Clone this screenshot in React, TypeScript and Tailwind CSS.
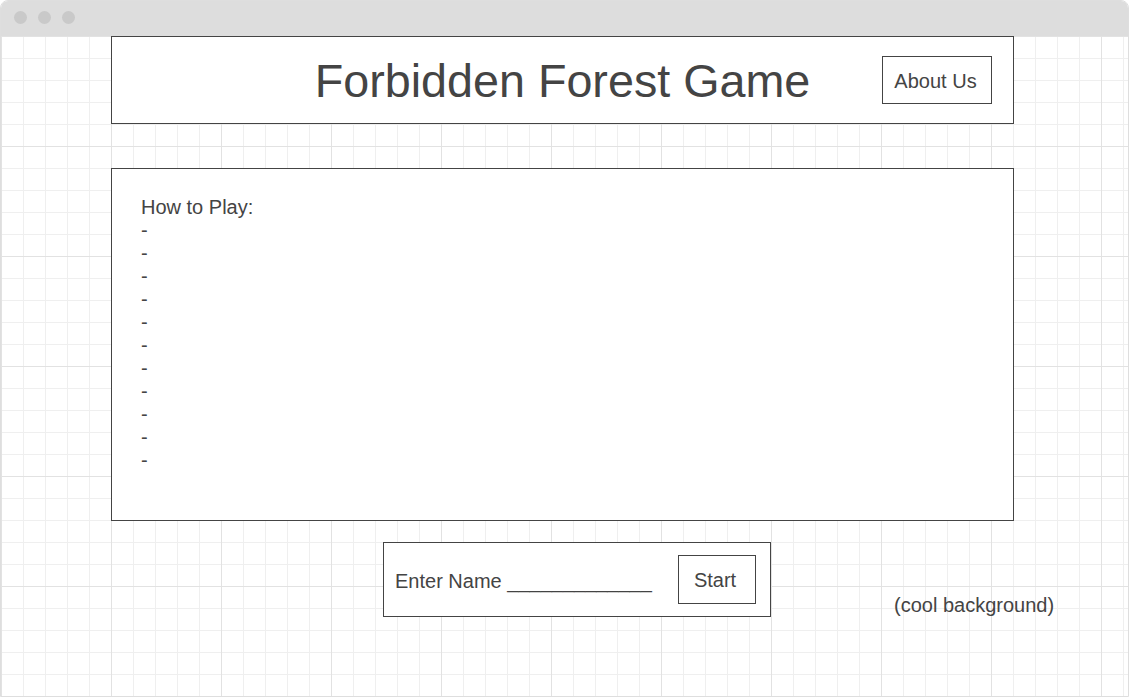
export default function App() {
  const dashes = Array.from({ length: 11 });
  return (
    <div className="w-[1129px] h-[699px] bg-white font-['Liberation_Sans',Arial,sans-serif] text-[#444444]">
      <div className="h-[697px] w-full border border-[#dedede] rounded-t-[8px] overflow-hidden flex flex-col">
        {/* window bar */}
        <div className="h-[35px] bg-[#dddddd] flex items-center gap-[11px] pl-[13px] pb-[2px] shrink-0">
          <span className="w-[13px] h-[13px] rounded-full bg-[#c9c9c9]" />
          <span className="w-[13px] h-[13px] rounded-full bg-[#c9c9c9]" />
          <span className="w-[13px] h-[13px] rounded-full bg-[#c9c9c9]" />
        </div>

        {/* grid canvas */}
        <div className="flex-1 bg-white bg-[linear-gradient(to_right,#e2e2e2_1px,transparent_1px),linear-gradient(to_bottom,#e2e2e2_1px,transparent_1px),linear-gradient(to_right,#efefef_1px,transparent_1px),linear-gradient(to_bottom,#efefef_1px,transparent_1px)] bg-[size:110px_110px,110px_110px,22px_22px,22px_22px] pl-[110px]">
          {/* header */}
          <div className="w-[903px] h-[88px] border border-[#444444] bg-white grid grid-cols-[1fr_auto_1fr] items-center">
            <div />
            <h1 className="text-[46.7px] leading-none pt-[2px]">Forbidden Forest Game</h1>
            <div className="flex justify-end pr-[21px]">
              <button className="w-[110px] h-[48px] border border-[#444444] text-[20px] pt-[1px] pr-[3px]">About Us</button>
            </div>
          </div>

          {/* how to play */}
          <div className="mt-[44px] w-[903px] h-[353px] border border-[#444444] bg-white pl-[29px] pt-[27px] text-[20px] leading-[23px]">
            <p>How to Play:</p>
            {dashes.map((_, i) => (
              <p key={i}>-</p>
            ))}
          </div>

          {/* name row */}
          <div className="flex items-start mt-[21px]">
            <div className="ml-[272px] w-[388px] h-[75px] border border-[#444444] bg-white flex items-center justify-between pl-[11px] pr-[14px]">
              <span className="text-[20px] pt-[2px]">Enter Name _____________</span>
              <button className="w-[78px] h-[49px] border border-[#444444] text-[20px] pt-[1px] pr-[4px]">Start</button>
            </div>
            <span className="ml-[123px] mt-[48px] text-[20px]">(cool background)</span>
          </div>
        </div>
      </div>
    </div>
  );
}
